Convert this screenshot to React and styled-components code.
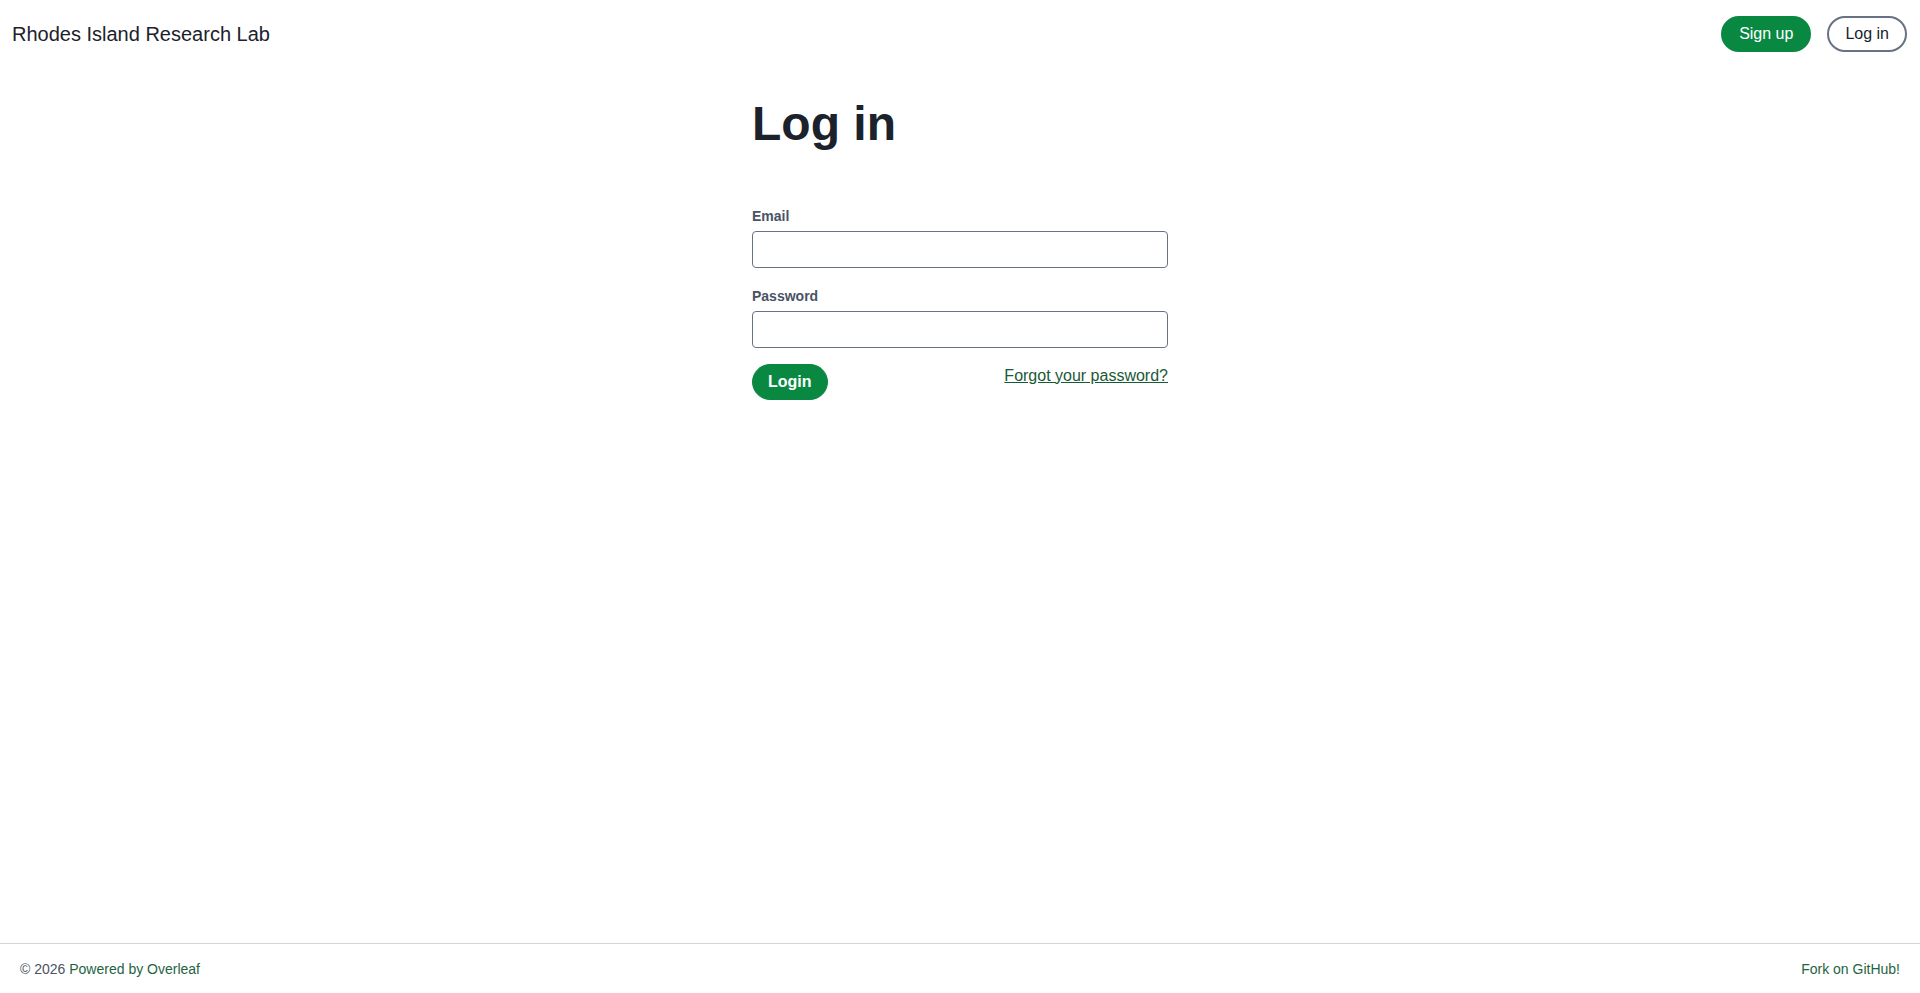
import React from 'react';
import styled, { createGlobalStyle } from 'styled-components';

const GlobalStyle = createGlobalStyle`
  html, body {
    margin: 0;
    padding: 0;
    background: #fff;
  }
  body {
    font-family: "Liberation Sans", Arial, sans-serif;
    color: #1b222c;
  }
  * {
    box-sizing: border-box;
  }
`;

export default function App() {
  return (
    <Page>
      <GlobalStyle />
      <Header>
        <Brand href="#">Rhodes Island Research Lab</Brand>
        <NavActions>
          <Button $variant="primary">Sign up</Button>
          <Button $variant="outline">Log in</Button>
        </NavActions>
      </Header>

      <Main>
        <Card>
          <Title>Log in</Title>
          <form onSubmit={(e) => e.preventDefault()}>
            <FormGroup>
              <Label htmlFor="email">Email</Label>
              <Input id="email" type="email" />
            </FormGroup>
            <FormGroup>
              <Label htmlFor="password">Password</Label>
              <Input id="password" type="password" />
            </FormGroup>
            <Actions>
              <SubmitButton $variant="primary" type="submit">
                Login
              </SubmitButton>
              <ForgotLink href="#">Forgot your password?</ForgotLink>
            </Actions>
          </form>
        </Card>
      </Main>

      <Footer>
        <FooterText>
          © 2026 <FooterLink href="#">Powered by Overleaf</FooterLink>
        </FooterText>
        <FooterLink href="#">Fork on GitHub!</FooterLink>
      </Footer>
    </Page>
  );
}

const Page = styled.div`
  min-height: 100vh;
  display: flex;
  flex-direction: column;
`;

const Header = styled.header`
  height: 68px;
  display: flex;
  align-items: center;
  justify-content: space-between;
  padding: 0 13px 0 12px;
  flex-shrink: 0;
`;

const Brand = styled.a`
  font-size: 20px;
  color: #1b222c;
  text-decoration: none;
`;

const NavActions = styled.div`
  display: flex;
  align-items: center;
  gap: 16px;
`;

const Button = styled.button`
  height: 36px;
  padding: 0 16px;
  border-radius: 18px;
  font-family: inherit;
  font-size: 16px;
  font-weight: 400;
  line-height: 1;
  cursor: pointer;
  border: 2px solid ${(p) => (p.$variant === 'primary' ? '#098842' : '#677283')};
  background: ${(p) => (p.$variant === 'primary' ? '#098842' : '#fff')};
  color: ${(p) => (p.$variant === 'primary' ? '#fff' : '#1b222c')};
`;

const SubmitButton = styled(Button)`
  padding: 0 15px;
  border-width: 1px;
  font-weight: 700;
`;

const Main = styled.main`
  flex: 1;
  display: flex;
  justify-content: center;
`;

const Card = styled.div`
  width: 416px;
`;

const Title = styled.h1`
  margin: 27px 0 51px;
  font-size: 48px;
  line-height: 1.2;
  font-weight: 700;
  color: #1b222c;
`;

const FormGroup = styled.div`
  margin-bottom: 16px;
`;

const Label = styled.label`
  display: block;
  font-size: 14px;
  line-height: 24px;
  font-weight: 700;
  color: #495365;
  margin-bottom: 3px;
`;

const Input = styled.input`
  display: block;
  width: 100%;
  height: 37px;
  padding: 0 12px;
  border: 1px solid #677283;
  border-radius: 4px;
  font-family: inherit;
  font-size: 16px;
  color: #1b222c;
  background: #fff;
  outline: none;
`;

const Actions = styled.div`
  display: flex;
  justify-content: space-between;
  align-items: flex-start;
`;

const ForgotLink = styled.a`
  font-size: 16px;
  line-height: 24px;
  color: #195936;
  text-decoration: underline;
`;

const Footer = styled.footer`
  height: 50px;
  border-top: 1px solid #d0d4db;
  display: flex;
  align-items: center;
  justify-content: space-between;
  padding: 0 20px;
  font-size: 14px;
  flex-shrink: 0;
`;

const FooterText = styled.span`
  color: #495365;
`;

const FooterLink = styled.a`
  color: #1e6443;
  text-decoration: none;
`;
